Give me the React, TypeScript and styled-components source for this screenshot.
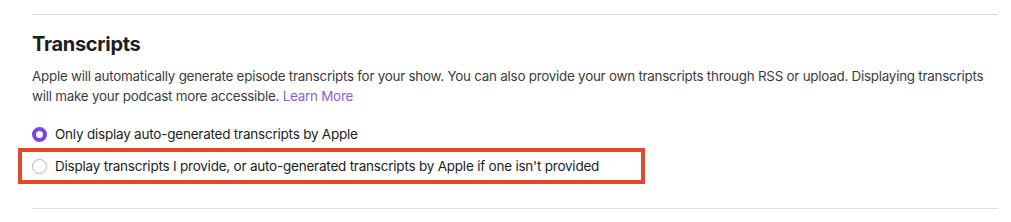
import React, { useState } from 'react';
import styled, { createGlobalStyle } from 'styled-components';

const GlobalStyle = createGlobalStyle`
    html, body {
        margin: 0;
        padding: 0;
        background: #ffffff;
    }
    body {
        font-family: Inter, "Liberation Sans", Arial, sans-serif;
        -webkit-font-smoothing: antialiased;
    }
`;

const Section = styled.section`
    padding: 14px 13px 0 32px;
`;

const Divider = styled.hr`
    border: none;
    height: 1px;
    background: #dedee0;
    margin: 0;
`;

const Heading = styled.h2`
    margin: 17px 0 0;
    font-size: 20px;
    line-height: 24px;
    font-weight: 700;
    color: #1d1d1f;
    letter-spacing: -0.3px;
`;

const Description = styled.p`
    margin: 10px 0 0;
    font-size: 13.4px;
    line-height: 20px;
    letter-spacing: -0.24px;
    color: #3c3c40;
`;

const LearnMore = styled.a`
    color: #8a5fd3;
    text-decoration: none;
    cursor: pointer;
`;

const Options = styled.div`
    display: flex;
    flex-direction: column;
    align-items: flex-start;
    margin-top: 18px;
    gap: 4px;
`;

const Highlight = styled.div<{ $active: boolean }>`
    margin-left: ${(p) => (p.$active ? '-14px' : '0')};
    padding: ${(p) => (p.$active ? '4px 42px 4px 10px' : '0')};
    border: ${(p) => (p.$active ? '4px solid #e3472f' : 'none')};
`;

const Option = styled.label`
    display: flex;
    align-items: center;
    gap: 8px;
    height: 20px;
    font-size: 13.5px;
    letter-spacing: -0.22px;
    color: #1d1d1f;
    cursor: pointer;
`;

const Radio = styled.span<{ $checked: boolean }>`
    box-sizing: border-box;
    width: 15px;
    height: 15px;
    border-radius: 50%;
    flex-shrink: 0;
    background: #ffffff;
    border: ${(p) => (p.$checked ? '4.5px solid #7a45de' : '1px solid #b4b4b8')};
`;

const BottomDivider = styled(Divider)`
    margin-top: 24px;
`;

const options = [
    'Only display auto-generated transcripts by Apple',
    "Display transcripts I provide, or auto-generated transcripts by Apple if one isn't provided",
];

export default function App() {
    const [selected, setSelected] = useState(0);

    return (
        <>
            <GlobalStyle />
            <Section>
                <Divider />
                <Heading>Transcripts</Heading>
                <Description>
                    Apple will automatically generate episode transcripts for your show. You can also provide your own
                    transcripts through RSS or upload. Displaying transcripts will make your podcast more accessible.{' '}
                    <LearnMore>Learn More</LearnMore>
                </Description>
                <Options>
                    {options.map((text, i) => (
                        <Highlight key={text} $active={i === 1}>
                            <Option onClick={() => setSelected(i)}>
                                <Radio $checked={selected === i} />
                                {text}
                            </Option>
                        </Highlight>
                    ))}
                </Options>
                <BottomDivider />
            </Section>
        </>
    );
}
